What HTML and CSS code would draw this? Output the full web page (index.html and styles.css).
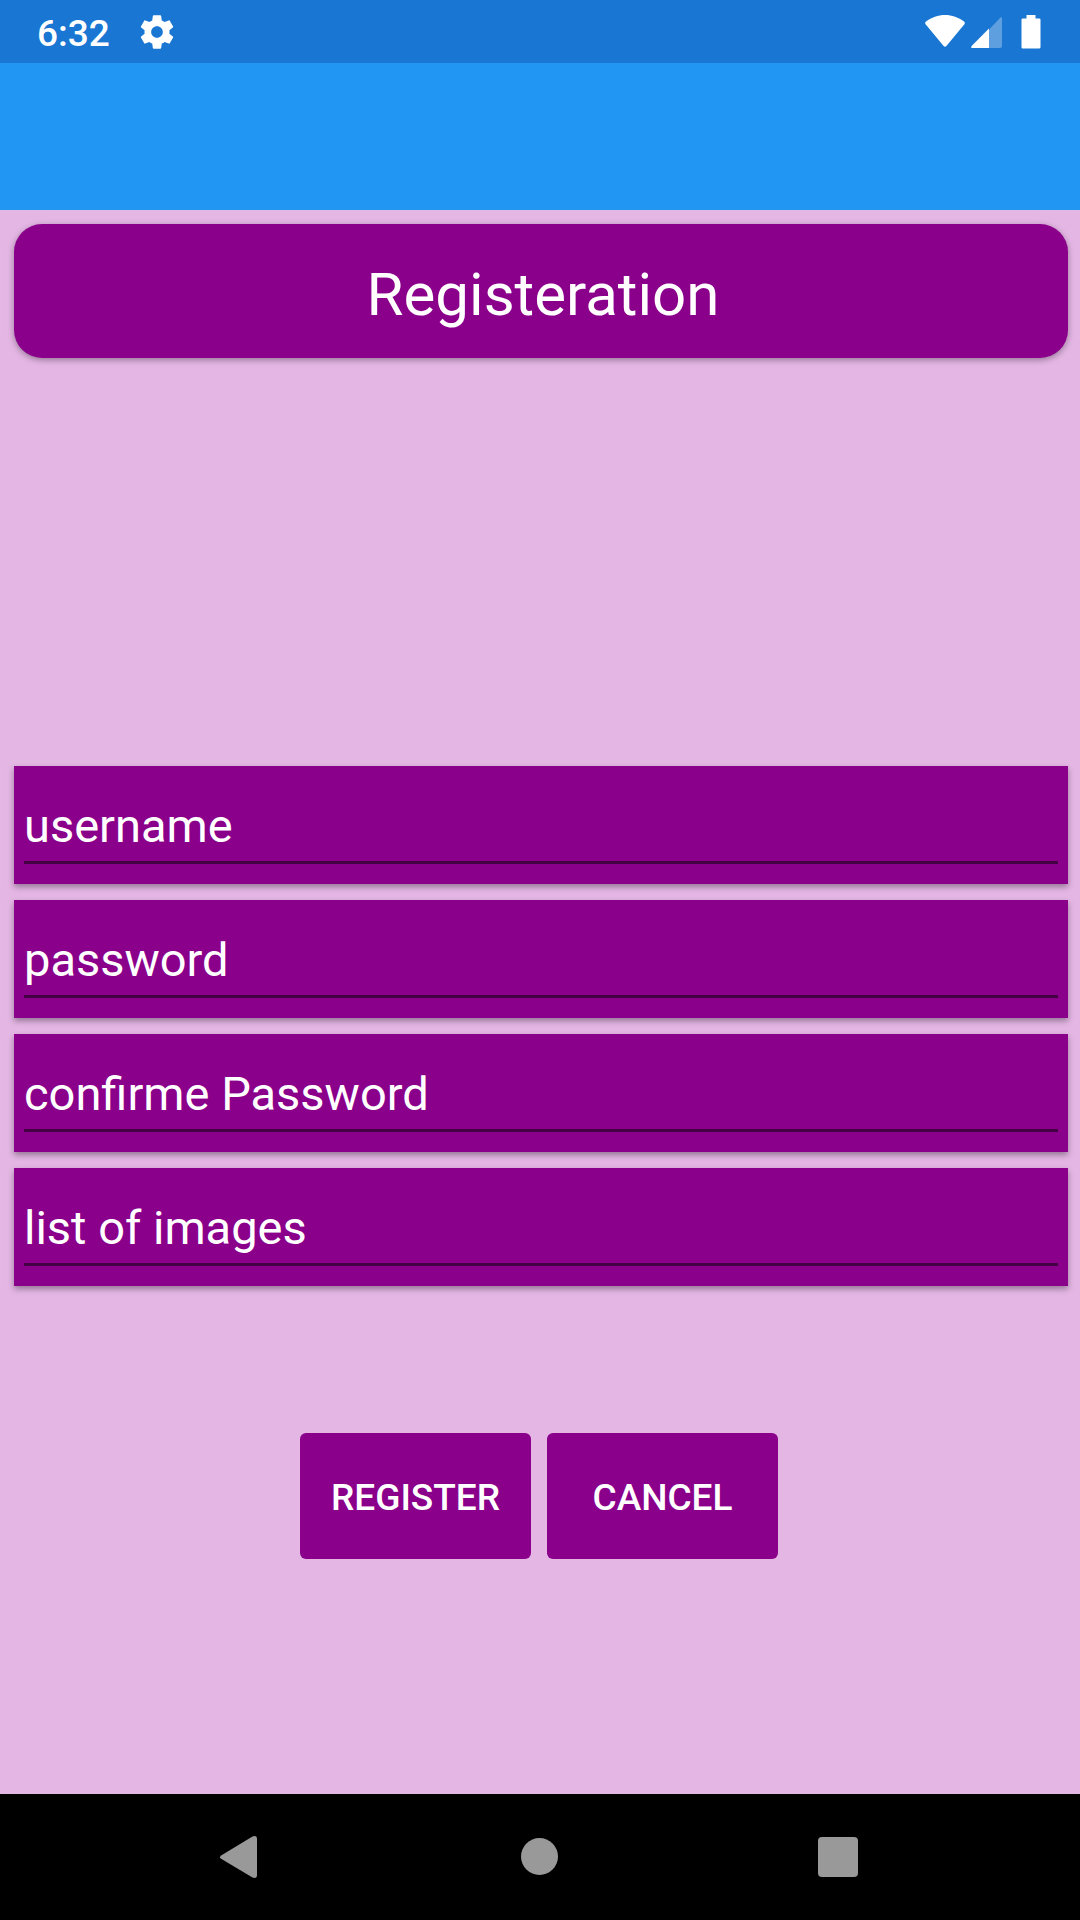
FILE: index.html
```html
<!DOCTYPE html>
<html lang="en">
<head>
  <meta charset="utf-8">
  <meta name="viewport" content="width=device-width, initial-scale=1">
  <title>Registeration</title>
  <link rel="stylesheet" href="styles.css">
</head>
<body>
  <div class="screen">
    <header>
      <div class="status-bar">
        <time class="clock">6:32</time>
        <svg class="gear" width="40" height="40" viewBox="0 0 24 24" aria-hidden="true">
          <path fill="currentColor" d="M19.43 12.98c.04-.32.07-.64.07-.98s-.03-.66-.07-.98l2.11-1.65c.19-.15.24-.42.12-.64l-2-3.46c-.12-.22-.39-.3-.61-.22l-2.49 1c-.52-.4-1.08-.73-1.69-.98l-.38-2.65C14.46 2.18 14.25 2 14 2h-4c-.25 0-.46.18-.49.42l-.38 2.65c-.61.25-1.17.59-1.69.98l-2.49-1c-.23-.09-.49 0-.61.22l-2 3.46c-.13.22-.07.49.12.64l2.11 1.65c-.04.32-.07.65-.07.98s.03.66.07.98l-2.11 1.65c-.19.15-.24.42-.12.64l2 3.46c.12.22.39.3.61.22l2.49-1c.52.4 1.08.73 1.69.98l.38 2.65c.03.24.24.42.49.42h4c.25 0 .46-.18.49-.42l.38-2.65c.61-.25 1.17-.59 1.69-.98l2.49 1c.23.09.49 0 .61-.22l2-3.46c.12-.22.07-.49-.12-.64l-2.11-1.65zM12 15.5c-1.93 0-3.5-1.57-3.5-3.5s1.57-3.5 3.5-3.5 3.5 1.57 3.5 3.5-1.57 3.5-3.5 3.5z"/>
        </svg>
        <div class="indicators">
          <svg width="40" height="34" viewBox="0 0 40 34" aria-hidden="true">
            <path fill="currentColor" d="M1 6.5C6.500 2.500 13 0 20 0s13.500 2.500 19 6.500q1.500 1.200.4 2.700L21.400 31q-1.400 1.600-2.800 0L.6 9.200Q-.5 7.700 1 6.500z"/>
          </svg>
          <svg width="32" height="34" viewBox="0 0 32 34" aria-hidden="true">
            <path fill="currentColor" fill-opacity=".3" d="M18 14.500 29.500 2.600Q31 1.400 31 3.500V31q0 2-2 2H18z"/>
            <path fill="currentColor" d="M18 13.500V33H1.500Q-.5 33 .6 31z"/>
          </svg>
          <svg class="battery" width="20" height="34" viewBox="0 0 20 34" aria-hidden="true">
            <path fill="currentColor" d="M5.500 0h9v3.500h3.700q1.300 0 1.300 1.300v27.400q0 1.300-1.300 1.300H1.800Q.5 33.500.5 32.200V4.800q0-1.300 1.300-1.300h3.700z"/>
          </svg>
        </div>
      </div>
      <div class="app-bar"></div>
    </header>

    <main class="content">
      <h1 class="title">Registeration</h1>
      <form class="form">
        <div class="fields">
          <div class="field"><input class="field-input" type="text" name="username" placeholder="username" aria-label="username"></div>
          <div class="field"><input class="field-input" type="password" name="password" placeholder="password" aria-label="password"></div>
          <div class="field"><input class="field-input" type="password" name="confirm" placeholder="confirme Password" aria-label="confirme Password"></div>
          <div class="field"><input class="field-input" type="text" name="images" placeholder="list of images" aria-label="list of images"></div>
        </div>
        <div class="actions">
          <button class="button" type="submit">REGISTER</button>
          <button class="button" type="button">CANCEL</button>
        </div>
      </form>
    </main>

    <nav class="nav-bar">
      <button class="nav-button" type="button" aria-label="Back">
        <svg width="44" height="44" viewBox="2 0 44 44" aria-hidden="true">
          <path fill="currentColor" d="M4.500 20.300 35.500 1.500Q40 0 40 4v36q0 4-4.500 2.500L4.500 24q-3-1.800 0-3.700z"/>
        </svg>
      </button>
      <button class="nav-button" type="button" aria-label="Home">
        <svg width="44" height="44" viewBox="0 0 44 44" aria-hidden="true">
          <circle fill="currentColor" cx="21.500" cy="21.500" r="18.500"/>
        </svg>
      </button>
      <button class="nav-button" type="button" aria-label="Recent apps">
        <svg width="44" height="44" viewBox="0 0 44 44" aria-hidden="true">
          <rect fill="currentColor" x="1" y="2" width="40" height="40" rx="4"/>
        </svg>
      </button>
    </nav>
  </div>
</body>
</html>
```
FILE: styles.css
```css
:root {
  --purple: #8b008b;
  --lilac: #e4b6e4;
  --status-blue: #1976d2;
  --bar-blue: #2196f3;
}

* {
  box-sizing: border-box;
}

body {
  margin: 0;
  font-family: Roboto, "Noto Sans", sans-serif;
  color: #fff;
}

.screen {
  display: flex;
  flex-direction: column;
  min-height: 100vh;
  background: var(--lilac);
}

.status-bar {
  display: flex;
  align-items: center;
  height: 63px;
  padding: 0 39px 0 37px;
  background: var(--status-blue);
}

.clock {
  font-size: 37px;
  font-weight: 500;
  line-height: 44px;
  padding-top: 4px;
}

.gear {
  margin-left: 27px;
}

.indicators {
  display: flex;
  gap: 6px;
  margin-left: auto;
}

.battery {
  margin-left: 12px;
}

.app-bar {
  height: 147px;
  background: var(--bar-blue);
}

.content {
  flex: 1;
  padding: 14px 12px 0 14px;
}

.title {
  margin: 0;
  padding: 36px 0 28px 4px;
  border-radius: 28px;
  background: var(--purple);
  box-shadow: 0 2px 6px rgba(0, 0, 0, 0.35);
  font-size: 60px;
  font-weight: 400;
  line-height: 70px;
  text-align: center;
}

.form {
  margin-top: 408px;
}

.fields {
  display: grid;
  gap: 16px;
}

.field {
  padding: 31px 10px 20px;
  background: var(--purple);
  box-shadow: 0 3px 6px rgba(0, 0, 0, 0.35);
}

.field-input {
  display: block;
  width: 100%;
  height: 67px;
  padding: 0 0 8px;
  border: 0;
  border-bottom: 3px solid #430043;
  border-radius: 0;
  outline: 0;
  background: transparent;
  color: #fff;
  font: 400 47px/56px Roboto, "Noto Sans", sans-serif;
}

.field-input::placeholder {
  color: #fff;
  opacity: 1;
}

.actions {
  display: flex;
  justify-content: center;
  gap: 16px;
  margin: 147px 0 40px;
  padding-right: 4px;
}

.button {
  min-width: 231px;
  padding: 43px 24px 39px;
  border: 0;
  border-radius: 6px;
  background: var(--purple);
  color: #fff;
  font: 500 37px/44px Roboto, "Noto Sans", sans-serif;
}

.nav-bar {
  display: flex;
  justify-content: center;
  gap: 255px;
  height: 126px;
  background: #000;
}

.nav-button {
  display: flex;
  align-items: center;
  padding: 0;
  border: 0;
  background: none;
  color: #999;
}
```
